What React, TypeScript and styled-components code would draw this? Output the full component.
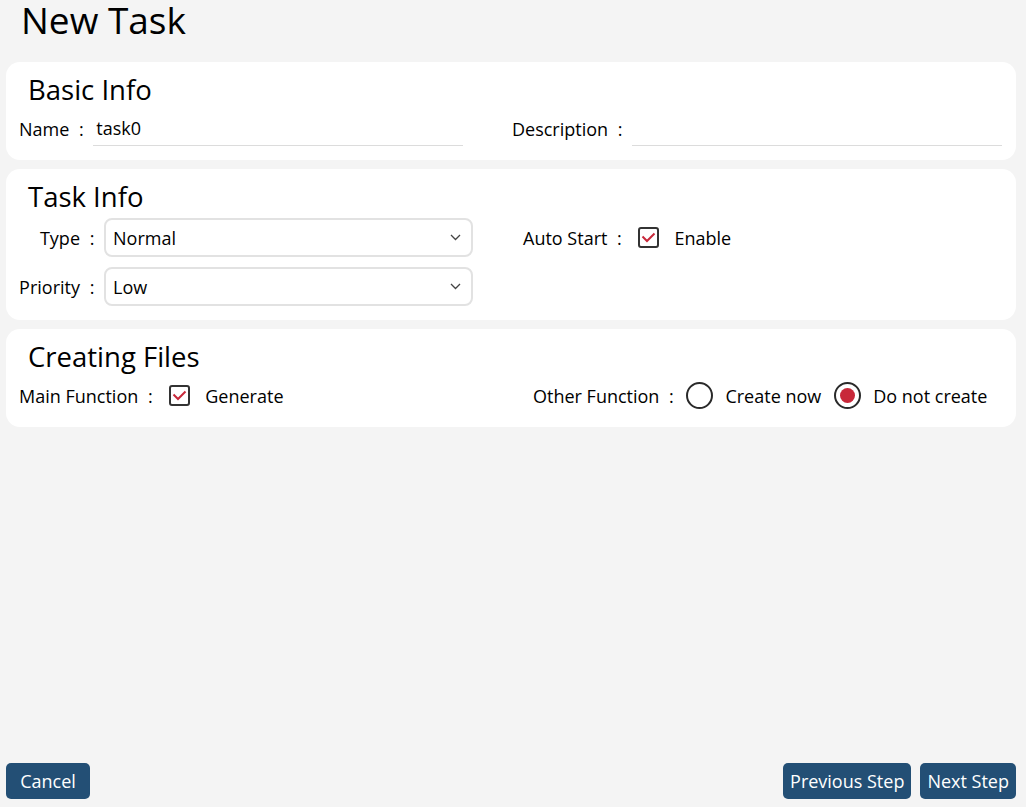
import React from "react";
import styled, { createGlobalStyle } from "styled-components";

const Global = createGlobalStyle`
  html, body { margin: 0; padding: 0; background: #f4f4f4; }
  body { font-family: "Open Sans", "Noto Sans CJK SC", sans-serif; color: #000; }
  * { box-sizing: border-box; }
`;

const Page = styled.div`
  width: 1026px;
  height: 807px;
  display: flex;
  flex-direction: column;
  padding: 0 10px 8px 6px;
`;

const Title = styled.h1`
  margin: 0;
  height: 62px;
  padding: 0 0 0 15px;
  font-size: 37px;
  font-weight: 400;
  line-height: 40px;
  overflow: visible;
`;

const Card = styled.section`
  background: #fff;
  border-radius: 14px;
  padding: 10px 13px 14px;
  margin-bottom: 9px;
`;

const CardTitle = styled.h2`
  margin: 0 0 3px 9px;
  font-size: 27.5px;
  font-weight: 400;
  line-height: 36px;
`;

const Row = styled.div<{ $cols: string }>`
  display: grid;
  grid-template-columns: ${(p) => p.$cols};
  align-items: start;
`;

const Field = styled.div<{ $h?: number }>`
  display: flex;
  align-items: center;
  height: ${(p) => p.$h ?? 35}px;
`;

const LabelBox = styled.span<{ $w?: number }>`
  display: inline-flex;
  justify-content: flex-end;
  align-items: center;
  font-size: 18px;
  line-height: 24px;
  white-space: nowrap;
  ${(p) => (p.$w ? `width: ${p.$w}px;` : "")}
`;

const Colon = styled.span`
  display: inline-block;
  width: 24px;
  text-align: center;
`;

const Text = styled.span<{ $ml?: number }>`
  font-size: 18px;
  line-height: 24px;
  white-space: nowrap;
  margin-left: ${(p) => p.$ml ?? 0}px;
`;

const TextInput = styled.div`
  width: 370px;
  height: 35px;
  border-bottom: 1px solid #dcdcdc;
  font-size: 18px;
  line-height: 34px;
  padding-left: 3px;
`;

const SelectBox = styled.div`
  width: 369px;
  height: 39px;
  border: 2px solid #e2e2e2;
  border-radius: 8px;
  display: flex;
  align-items: center;
  justify-content: space-between;
  padding: 0 10px 0 7px;
  font-size: 18px;
`;

const SelectCol = styled.div`
  display: flex;
  flex-direction: column;
  gap: 10px;
`;

const Check = styled.span`
  width: 21px;
  height: 21px;
  border: 2px solid #333;
  border-radius: 3px;
  display: inline-flex;
  align-items: center;
  justify-content: center;
  margin-left: 7px;
`;

const Radio = styled.span<{ $on?: boolean; $ml: number }>`
  width: 27px;
  height: 27px;
  border: 2.5px solid #2a2a2a;
  border-radius: 50%;
  display: inline-flex;
  align-items: center;
  justify-content: center;
  margin-left: ${(p) => p.$ml}px;
  &::after {
    content: "";
    display: ${(p) => (p.$on ? "block" : "none")};
    width: 15px;
    height: 15px;
    border-radius: 50%;
    background: #c8283a;
  }
`;

const Spacer = styled.div`
  flex: 1;
`;

const Footer = styled.div`
  display: flex;
  align-items: center;
  gap: 9px;
`;

const Button = styled.button`
  height: 36px;
  background: #234f75;
  color: #fff;
  border: none;
  border-radius: 5px;
  font-family: inherit;
  font-size: 18px;
  padding: 0 7px;
  min-width: 84px;
`;

const CheckMark = () => (
  <svg width="15" height="11" viewBox="0 0 15 11">
    <path d="M1.5 4.5 L6 9 L13.5 1.5" fill="none" stroke="#c8283a" strokeWidth="2" />
  </svg>
);

const Chevron = () => (
  <svg width="11" height="7" viewBox="0 0 11 7">
    <path d="M1 1 L5.5 5.5 L10 1" fill="none" stroke="#444" strokeWidth="1.3" />
  </svg>
);

const Label = ({ children, w }: { children: React.ReactNode; w?: number }) => (
  <LabelBox $w={w}>
    {children}
    <Colon>:</Colon>
  </LabelBox>
);

export default function App() {
  return (
    <>
      <Global />
      <Page>
        <Title>New Task</Title>
        <Card>
          <CardTitle>Basic Info</CardTitle>
          <Row $cols="493px 1fr">
            <Field>
              <Label>Name</Label>
              <TextInput>task0</TextInput>
            </Field>
            <Field>
              <Label>Description</Label>
              <TextInput />
            </Field>
          </Row>
        </Card>
        <Card>
          <CardTitle>Task Info</CardTitle>
          <Row $cols="504px 1fr">
            <SelectCol>
              <Field $h={39}>
                <Label w={85}>Type</Label>
                <SelectBox>
                  Normal <Chevron />
                </SelectBox>
              </Field>
              <Field $h={39}>
                <Label w={85}>Priority</Label>
                <SelectBox>
                  Low <Chevron />
                </SelectBox>
              </Field>
            </SelectCol>
            <Field $h={39}>
              <Label>Auto Start</Label>
              <Check>
                <CheckMark />
              </Check>
              <Text $ml={15}>Enable</Text>
            </Field>
          </Row>
        </Card>
        <Card>
          <CardTitle>Creating Files</CardTitle>
          <Row $cols="514px 1fr">
            <Field>
              <Label>Main Function</Label>
              <Check>
                <CheckMark />
              </Check>
              <Text $ml={15}>Generate</Text>
            </Field>
            <Field>
              <Label>Other Function</Label>
              <Radio $ml={3} />
              <Text $ml={12}>Create now</Text>
              <Radio $ml={13} $on />
              <Text $ml={12}>Do not create</Text>
            </Field>
          </Row>
        </Card>
        <Spacer />
        <Footer>
          <Button>Cancel</Button>
          <Spacer />
          <Button>Previous Step</Button>
          <Button>Next Step</Button>
        </Footer>
      </Page>
    </>
  );
}
